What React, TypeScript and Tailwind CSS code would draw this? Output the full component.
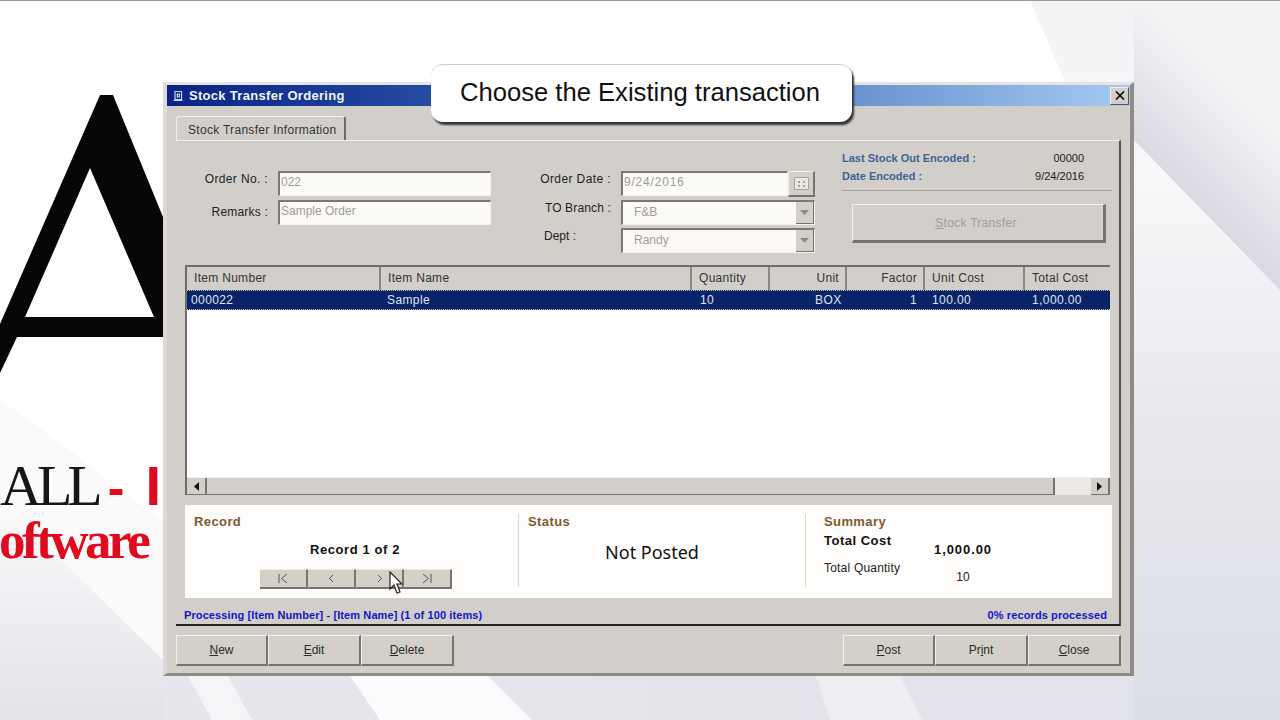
const ui = "font-['Liberation_Sans',Arial,sans-serif]";

function Sunken({ text, className = "" }: { text: string; className?: string }) {
  return (
    <div
      className={`h-[25px] bg-[#fbfaf7] border-t-2 border-l-2 border-[#7b7873] border-r border-b border-r-[#f4f2ee] border-b-[#f4f2ee] pl-[1px] text-[12px] leading-[18px] text-[#a09d98] ${className}`}
    >
      {text}
    </div>
  );
}

function Combo({ text }: { text: string }) {
  return (
    <div className="h-[25px] flex bg-[#fbfaf7] border-t-2 border-l-2 border-[#7b7873] border-r border-b border-r-[#f4f2ee] border-b-[#f4f2ee]">
      <div className="flex-1 pl-[11px] pt-[1px] text-[12px] leading-[18px] text-[#a09d98]">{text}</div>
      <div className="w-[18px] h-[22px] bg-[#d4d0c8] border-r border-b border-[#77746f] flex items-center justify-center">
        <svg width="9" height="5" viewBox="0 0 9 5">
          <path d="M0 0h9L4.5 5z" fill="#8d8a85" />
        </svg>
      </div>
    </div>
  );
}

function RaisedButton({ label, u, rest, className = "" }: { label?: string; u: string; rest: string; className?: string }) {
  return (
    <div
      className={`h-[31px] flex items-center justify-center text-[12px] text-[#2b2b2b] bg-[#d4d0c8] border-t border-l border-[#f2f0ec] border-r-2 border-b-2 border-r-[#77746f] border-b-[#77746f] ${className}`}
    >
      {label}
      <span className="underline">{u}</span>
      {rest}
    </div>
  );
}

function HeadCell({ text, className }: { text: string; className: string }) {
  return (
    <div className={`h-full pt-[2px] pl-[7px] pr-[6px] text-[12px] tracking-[0.3px] text-[#333] border-r-2 border-[#8a8782] ${className}`}>{text}</div>
  );
}

function NavButton({ d }: { d: string }) {
  return (
    <div className="w-[48px] h-[20px] bg-[#d4d0c8] border-r-2 border-b-2 border-[#77746f] border-t border-t-[#eeece8] flex items-center justify-center">
      <svg width="12" height="11" viewBox="0 0 12 11" fill="none" stroke="#555" strokeWidth="1">
        <path d={d} />
      </svg>
    </div>
  );
}

export default function App() {
  return (
    <div className={`relative w-[1280px] h-[720px] overflow-hidden bg-white ${ui}`}>
      {/* wallpaper */}
      <svg className="absolute inset-0" width="1280" height="720" viewBox="0 0 1280 720">
        <defs>
          <linearGradient id="side" x1="0" y1="0" x2="0" y2="1">
            <stop offset="0" stopColor="#f3f3f6" />
            <stop offset="0.25" stopColor="#f8f8fb" />
            <stop offset="0.6" stopColor="#e8e8ec" />
            <stop offset="1" stopColor="#dbdee8" />
          </linearGradient>
          <linearGradient id="streak" gradientUnits="userSpaceOnUse" x1="1207" y1="215" x2="1277" y2="145">
            <stop offset="0" stopColor="#d8d9e2" />
            <stop offset="1" stopColor="#f3f3f6" />
          </linearGradient>
          <linearGradient id="foot" x1="0" y1="0" x2="1" y2="0">
            <stop offset="0" stopColor="#e6e6ec" />
            <stop offset="1" stopColor="#e2e3ea" />
          </linearGradient>
          <linearGradient id="low" x1="0" y1="0" x2="0" y2="1">
            <stop offset="0" stopColor="#fbfbfc" />
            <stop offset="1" stopColor="#e2e2e9" />
          </linearGradient>
        </defs>
        <path d="M1030 0H1280V720H1134V82H1065z" fill="url(#side)" />
        <path d="M1134 140L1280 290V0H1134z" fill="url(#streak)" />
        <path d="M0 400C60 440 130 500 163 520V660L0 500z" fill="#fafafb" />
        <path d="M0 500L163 660V720H0z" fill="url(#low)" />
        <path d="M163 676H1134V720H163z" fill="url(#foot)" />
        <path d="M188 676H228L252 720H212z" fill="#f5f5f8" />
        <path d="M350 676H488L532 720H380z" fill="#fbfbfd" />
        <path d="M816 676H900L922 720H830z" fill="#eeeef2" />
        <path d="M0 0H1280V1H0z" fill="#999999" />
        <path d="M100 95H113L163 217V337H17L0 373V324z" fill="#060606" />
        <path d="M90 168L25 317H154z" fill="#fff" />
      </svg>
      <div className="absolute left-0 top-[462px] text-[58px] leading-[46px] whitespace-nowrap">
        <span className="tracking-[-5px] text-[#161616] font-['Liberation_Serif',serif]">ALL</span>
        <span className="text-[#e00a1e] font-bold text-[50px] font-['Liberation_Sans',sans-serif] ml-[10px]">-</span>
        <span className="text-[#e00a1e] font-bold text-[56px] font-['Liberation_Sans',sans-serif] ml-[21px]">I</span>
      </div>
      <div className="absolute -left-[1px] top-[516px] text-[53px] leading-[48px] tracking-[-3.5px] font-bold text-[#e00a1e] font-['Liberation_Serif',serif] whitespace-nowrap">
        oftware
      </div>

      {/* window */}
      <div className="absolute left-[163px] top-[82px] w-[971px] h-[594px] bg-[#d2cfca] border-t-[3px] border-l-[4px] border-r-[4px] border-b-[3px] border-t-[#e6e4e0] border-l-[#dcdad6] border-r-[#8f8c88] border-b-[#8f8c88] flex flex-col">
        <div className="h-[21px] shrink-0 flex items-center bg-gradient-to-r from-[#0a2286] via-[#3f6ab8] to-[#a6caf0] pl-[6px] pr-[1px]">
          <svg className="mr-[5px]" width="11" height="12" viewBox="0 0 11 12" fill="none" stroke="#c8d3ee" strokeWidth="1.2">
            <path d="M2 1.5h6.5v8H2z" />
            <path d="M4.3 4h2v3h-2zM0.5 10.5h9" />
          </svg>
          <div className="text-[13px] font-bold tracking-[0.3px] text-[#f2f4fb]">Stock Transfer Ordering</div>
          <div className="ml-auto w-[19px] h-[18px] bg-[#d4d0c8] border-t border-l border-[#f2f0ec] border-r border-b border-r-[#555] border-b-[#555] flex items-center justify-center">
            <svg width="10" height="9" viewBox="0 0 10 9" stroke="#111" strokeWidth="1.7">
              <path d="M1 0.5l8 8M9 0.5l-8 8" />
            </svg>
          </div>
        </div>

        <div className="flex-1 flex flex-col pl-[9px] pr-[9px]">
          <div className="h-[34px] shrink-0 flex items-end">
            <div className="w-[170px] h-[24px] rounded-t-[3px] border-t border-l border-[#f2f0ec] border-r-2 border-r-[#6e6b67] pl-[11px] pt-[4px] text-[12px] tracking-[0.3px] text-[#333]">
              Stock Transfer Information
            </div>
          </div>

          {/* tab panel */}
          <div className="h-[486px] shrink-0 border-t border-t-[#f0eeea] border-r-2 border-r-[#54524e] border-b-2 border-b-[#232220] flex flex-col">
            <div className="h-[124px] shrink-0 flex">
              <div className="w-[315px] shrink-0 pt-[30px] flex flex-col gap-[4px]">
                <div className="flex items-start">
                  <div className="w-[92px] text-right -mt-[1px] text-[12px] tracking-[0.35px] text-[#222]">Order No. :</div>
                  <Sunken text="022" className="ml-[10px] w-[213px]" />
                </div>
                <div className="flex items-start">
                  <div className="w-[92px] text-right pt-[3px] text-[12px] tracking-[0.2px] text-[#222]">Remarks :</div>
                  <Sunken text="Sample Order" className="ml-[10px] w-[213px]" />
                </div>
              </div>
              <div className="w-[324px] shrink-0 pl-[16px] pt-[30px] flex flex-col gap-[3px]">
                <div className="flex items-start">
                  <div className="w-[104px] text-right -mt-[1px] text-[12px] tracking-[0.4px] text-[#222]">Order Date :</div>
                  <Sunken text="9/24/2016" className="ml-[10px] w-[167px] tracking-[0.8px]" />
                  <div className="w-[27px] h-[26px] bg-[#d4d0c8] border-t border-l border-[#f2f0ec] border-r-2 border-b-2 border-r-[#77746f] border-b-[#77746f] flex items-center justify-center">
                    <svg width="15" height="13" viewBox="0 0 15 13">
                      <path d="M0.5 0.5h14v12h-14z" fill="#e9e7e3" stroke="#a5a29d" />
                      <path d="M4 4h2v2H4zM9 4h2v2H9zM4 8h2v2H4zM9 8h2v2H9z" fill="#a5a29d" />
                    </svg>
                  </div>
                </div>
                <div className="flex items-start">
                  <div className="w-[104px] text-right -mt-[1px] text-[12px] tracking-[0.15px] text-[#222]">TO Branch :</div>
                  <div className="ml-[10px] w-[194px]"><Combo text="F&B" /></div>
                </div>
                <div className="flex items-start">
                  <div className="w-[69px] text-right -mt-[1px] text-[12px] text-[#222]">Dept :</div>
                  <div className="ml-[45px] w-[194px]"><Combo text="Randy" /></div>
                </div>
              </div>
              <div className="w-[270px] shrink-0 ml-[27px] pt-[8px]">
                <div className="flex justify-between pr-[28px] text-[11px] leading-[18px]">
                  <span className="font-bold text-[#3d6295]">Last Stock Out Encoded :</span>
                  <span className="text-[#222]">00000</span>
                </div>
                <div className="flex justify-between pr-[28px] text-[11px] leading-[18px] pb-[5px] border-b border-[#a5a29d]">
                  <span className="font-bold text-[#3d6295]">Date Encoded :</span>
                  <span className="text-[#222]">9/24/2016</span>
                </div>
                <div className="mt-[13px] ml-[10px] w-[254px] h-[39px] flex items-center justify-center pr-[4px] text-[12px] tracking-[0.3px] text-[#a09d98] bg-[#d2cfca] border-t border-l border-[#f2f0ec] border-r-[3px] border-b-[3px] border-r-[#77746f] border-b-[#77746f]">
                  <span className="underline">S</span>tock Transfer
                </div>
              </div>
            </div>

            {/* grid */}
            <div className="ml-[9px] w-[925px] h-[230px] shrink-0 border-t-2 border-l-2 border-[#6f6c68] bg-white flex flex-col">
              <div className="h-[23px] shrink-0 flex bg-[#d2cfca]">
                <HeadCell text="Item Number" className="w-[194px]" />
                <HeadCell text="Item Name" className="w-[311px]" />
                <HeadCell text="Quantity" className="w-[78px]" />
                <HeadCell text="Unit" className="w-[77px] text-right" />
                <HeadCell text="Factor" className="w-[78px] text-right" />
                <HeadCell text="Unit Cost" className="w-[100px]" />
                <div className="flex-1 pt-[2px] pl-[7px] pr-[6px] text-[12px] tracking-[0.3px] text-[#333] whitespace-nowrap overflow-hidden">Total Cost</div>
              </div>
              <div className="h-[20px] shrink-0 flex items-center bg-[#0a246a] pl-[1px] text-[12px] tracking-[0.4px] text-[#dfe4f2] border-y border-dotted border-[#c9c6a8] whitespace-nowrap">
                <div className="w-[199px] pl-[3px]">000022</div>
                <div className="w-[313px]">Sample</div>
                <div className="w-[115px]">10</div>
                <div className="w-[30px]">BOX</div>
                <div className="w-[72px] text-right">1</div>
                <div className="w-[115px] pl-[15px]">100.00</div>
                <div className="flex-1">1,000.00</div>
              </div>
              <div className="flex-1" />
              <div className="h-[18px] shrink-0 flex bg-[#ebe9e5] border-t border-[#f2f0ec]">
                <div className="w-[20px] bg-[#d4d0c8] border-r-2 border-b border-[#77746f] flex items-center justify-center">
                  <svg width="5" height="9" viewBox="0 0 5 9"><path d="M5 0v9L0 4.5z" fill="#111" /></svg>
                </div>
                <div className="w-[848px] bg-[#d2cfca] border-r-2 border-b border-[#77746f]" />
                <div className="flex-1" />
                <div className="w-[19px] bg-[#d4d0c8] border-r-2 border-b border-[#77746f] flex items-center justify-center">
                  <svg width="5" height="9" viewBox="0 0 5 9"><path d="M0 0v9l5-4.5z" fill="#111" /></svg>
                </div>
              </div>
            </div>

            {/* record, status, summary */}
            <div className="ml-[9px] mt-[10px] w-[927px] h-[93px] shrink-0 bg-[#fefdfc] flex pt-[9px] pb-[11px]">
              <div className="w-[334px] shrink-0 border-r border-[#d9d7d3] pl-[9px]">
                <div className="text-[13px] font-bold tracking-[0.4px] text-[#7f5a2e] leading-[15px]">Record</div>
                <div className="mt-[13px] w-[322px] text-center text-[13px] font-bold tracking-[0.6px] text-[#111] leading-[15px]">Record 1 of 2</div>
                <div className="mt-[12px] ml-[66px] flex">
                  <NavButton d="M2 1v9M10 1L4.5 5.5L10 10" />
                  <NavButton d="M8 2L4.5 5.5L8 9" />
                  <NavButton d="M5 2L8.5 5.5L5 9" />
                  <NavButton d="M2 1l5.5 4.5L2 10M10 1v9" />
                </div>
              </div>
              <div className="w-[287px] shrink-0 border-r border-[#d9d7d3] pl-[9px]">
                <div className="text-[13px] font-bold tracking-[0.4px] text-[#7f5a2e] leading-[15px]">Status</div>
                <div className="mt-[10px] text-center text-[18px] text-[#111] pr-[29px] font-['Noto_Sans',sans-serif]">Not Posted</div>
              </div>
              <div className="flex-1 pl-[18px]">
                <div className="text-[13px] font-bold tracking-[0.4px] text-[#7f5a2e] leading-[15px]">Summary</div>
                <div className="flex">
                  <div className="w-[110px]">
                    <div className="mt-[2px] text-[13px] font-bold tracking-[0.5px] text-[#111] leading-[19px]">Total Cost</div>
                    <div className="mt-[11px] text-[12px] tracking-[0.2px] text-[#222] leading-[14px]">Total Quantity</div>
                  </div>
                  <div className="w-[58px] text-center">
                    <div className="mt-[13px] text-[13px] font-bold tracking-[0.9px] text-[#111] leading-[15px] whitespace-nowrap">1,000.00</div>
                    <div className="mt-[13px] text-[12px] text-[#222] leading-[14px]">10</div>
                  </div>
                </div>
              </div>
            </div>

            <div className="flex-1 flex items-end justify-between pl-[8px] pr-[12px] pb-[1px] text-[11px] tracking-[0.1px] font-bold text-[#1414c8]">
              <span>Processing [Item Number] - [Item Name] (1 of 100 items)</span>
              <span>0% records processed</span>
            </div>
          </div>

          {/* bottom buttons */}
          <div className="flex justify-between mt-[9px]">
            <div className="flex">
              <RaisedButton u="N" rest="ew" className="w-[92px]" />
              <RaisedButton u="E" rest="dit" className="w-[93px]" />
              <RaisedButton u="D" rest="elete" className="w-[93px]" />
            </div>
            <div className="flex">
              <RaisedButton u="P" rest="ost" className="w-[92px]" />
              <RaisedButton label="Pr" u="i" rest="nt" className="w-[93px]" />
              <RaisedButton u="C" rest="lose" className="w-[93px]" />
            </div>
          </div>
        </div>
      </div>

      {/* caption over the window */}
      <div className="absolute left-[431px] top-[64px] w-[421px] h-[58px] bg-white rounded-[12px] border-t border-[#ccc] shadow-[2px_3px_2px_#333] flex items-center justify-center pb-[2px] pr-[3px] text-[25.6px] text-[#111]">
        Choose the Existing transaction
      </div>

      {/* mouse pointer */}
      <svg className="absolute left-[389px] top-[571px]" width="14" height="24" viewBox="0 0 14 24">
        <path d="M1 1v17l4-4 3 8 3-1-3-8h5z" fill="#fff" stroke="#222" strokeWidth="1.2" />
      </svg>
    </div>
  );
}
